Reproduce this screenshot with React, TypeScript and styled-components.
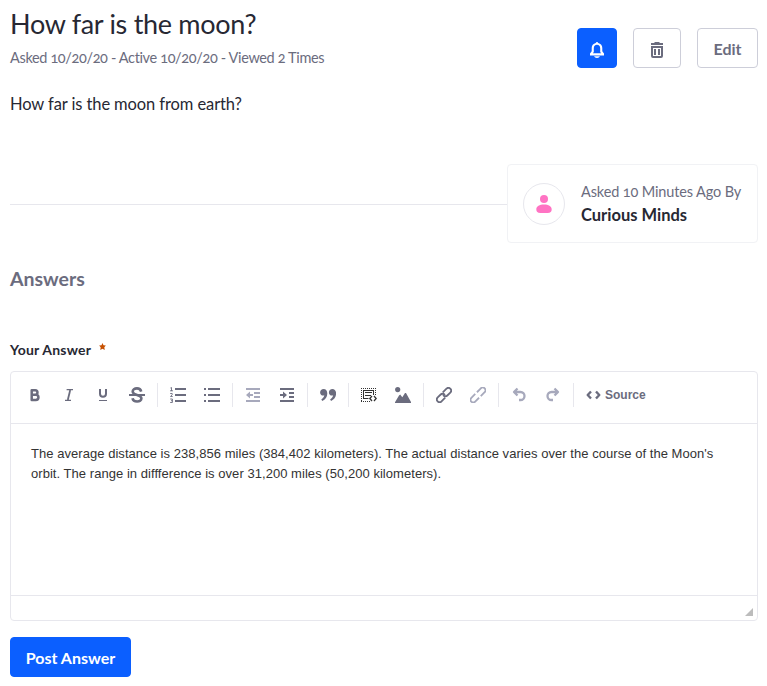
import React from 'react';
import styled, { createGlobalStyle } from 'styled-components';

const Global = createGlobalStyle`
  * { box-sizing: border-box; }
  body {
    margin: 0;
    background: #fff;
    color: #272833;
    font-family: Lato, 'Open Sans', sans-serif;
    font-variant-numeric: oldstyle-nums;
  }
  h1, h2, p { margin: 0; }
  svg { display: block; }
`;

const Page = styled.main`
  width: 748px;
  margin-left: 10px;
  padding-top: 4px;
`;

const Header = styled.header`
  display: flex;
  justify-content: space-between;
  height: 66px;
`;

const Title = styled.h1`
  padding-bottom: 2px;
  font-size: 27px;
  font-weight: 400;
  letter-spacing: -0.3px;
  line-height: 40px;
`;

const Meta = styled.p`
  font-size: 14.5px;
  line-height: 24px;
  letter-spacing: -0.36px;
  color: #6b6c7e;
`;

const Actions = styled.div`
  display: flex;
  gap: 16px;
  padding-top: 24px;
`;

const Button = styled.button<{ $primary?: boolean; $width: number }>`
  display: flex;
  align-items: center;
  justify-content: center;
  width: ${(p) => p.$width}px;
  height: 40px;
  padding: 2px 0 0;
  border: 1px solid ${(p) => (p.$primary ? '#0b5fff' : '#cdced9')};
  border-radius: 4px;
  background: ${(p) => (p.$primary ? '#0b5fff' : '#fff')};
  color: ${(p) => (p.$primary ? '#fff' : '#6b6c7e')};
  font-family: inherit;
  font-size: 16px;
  font-weight: 700;
  line-height: 24px;
  white-space: nowrap;

  svg { margin-top: 2px; }
`;

const Body = styled.p`
  margin-top: 22px;
  font-size: 16.5px;
  letter-spacing: -0.1px;
  line-height: 24px;
`;

const AuthorRow = styled.div`
  display: flex;
  align-items: center;
  margin-top: 48px;
`;

const Rule = styled.div`
  flex: 1;
  height: 1px;
  margin-top: 2px;
  background: #e7e7ed;
`;

const AuthorCard = styled.div`
  display: flex;
  align-items: center;
  gap: 16px;
  width: 251px;
  height: 79px;
  padding-left: 15px;
  border: 1px solid #f1f2f5;
  border-radius: 4px;
  white-space: nowrap;
`;

const Avatar = styled.div`
  display: grid;
  place-items: center;
  width: 42px;
  height: 42px;
  border: 1px solid #e7e7ed;
  border-radius: 50%;
`;

const AskedBy = styled.p`
  font-size: 14.5px;
  line-height: 24px;
  letter-spacing: -0.13px;
  color: #6b6c7e;
`;

const AuthorName = styled.p`
  padding-bottom: 2px;
  font-size: 16.5px;
  font-weight: 700;
  line-height: 22px;
`;

const SectionTitle = styled.h2`
  margin-top: 21px;
  font-size: 19.5px;
  font-weight: 700;
  line-height: 30px;
  color: #6b6c7e;
`;

const Label = styled.label`
  display: flex;
  gap: 8px;
  margin-top: 45px;
  height: 21px;
  font-size: 14px;
  font-weight: 700;
  letter-spacing: 0.2px;
  line-height: 21px;
`;

const Required = styled.svg`
  margin-top: 4px;
  color: #c65000;
`;

const Editor = styled.section`
  display: flex;
  flex-direction: column;
  height: 250px;
  margin-top: 11px;
  border: 1px solid #e7e7ed;
  border-radius: 4px;
`;

const Toolbar = styled.div`
  display: flex;
  align-items: center;
  height: 52px;
  padding: 0 7px 5px;
  border-bottom: 1px solid #e7e7ed;
`;

const Tool = styled.span<{ $disabled?: boolean }>`
  display: grid;
  place-items: center;
  width: 34px;
  height: 32px;
  color: ${(p) => (p.$disabled ? '#a7a9bc' : '#6b6c7e')};
`;

const Divider = styled.span`
  width: 1px;
  height: 24px;
  margin: 0 3px;
  background: #e7e7ed;
`;

const Source = styled.span`
  display: flex;
  align-items: center;
  gap: 4px;
  margin-left: 9px;
  color: #6b6c7e;
  font: 700 12px/24px 'Liberation Sans', Arial, sans-serif;
`;

const Content = styled.div`
  flex: 1;
  padding: 20px;
  color: #333;
  font: 400 13px/20px 'Liberation Sans', Arial, sans-serif;
  font-variant-numeric: normal;
  letter-spacing: 0.045px;
`;

const Footer = styled.div`
  display: flex;
  align-items: flex-end;
  justify-content: flex-end;
  height: 25px;
  padding: 0 4px 4px;
  border-top: 1px solid #e7e7ed;
`;

const Submit = styled.div`
  margin-top: 16px;
`;

const Icon = ({ children }: { children: React.ReactNode }) => (
  <svg width="16" height="16" viewBox="0 0 16 16" fill="currentColor">
    {children}
  </svg>
);

const Line = ({ d, width = 2 }: { d: string; width?: number }) => (
  <path d={d} fill="none" stroke="currentColor" strokeWidth={width} strokeLinejoin="round" />
);

const Bold = () => (
  <Icon><Line width={2.5} d="M4.700 3.200H8.200a2.200 2.200 0 0 1 0 4.500H4.700zM4.700 7.700h4.100a2.500 2.500 0 0 1 0 5.300H4.700z" /></Icon>
);
const Italic = () => (
  <Icon><Line width={1.3} d="M5.600 2.600H12M4 13.400h6" /><Line width={1.8} d="M9.200 3 6.800 13" /></Icon>
);
const Underline = () => (
  <Icon><Line width={2} d="M5 2v4.800a3 3 0 0 0 6 0V2" /><path d="M4 13h8v1H4z" /></Icon>
);
const Strike = () => (
  <Icon>
    <Line width={2.6} d="M12.200 4.600C11.700 2.600 10.300 1.400 8 1.400c-2.600 0-4.300 1.200-4.300 3.100 0 2.200 2 2.800 4.300 3.400 2.600.7 4.400 1.400 4.400 3.400 0 2.100-1.800 3.200-4.300 3.200-2.700 0-4.200-1.300-4.600-3.300" />
    <Line width={2} d="M0 8h16" />
  </Icon>
);
const Numbered = () => (
  <Icon>
    <path d="M5 1h11v2H5zM5 7h11v2H5zM5 13h11v2H5z" />
    <Line width={0.9} d="M.4 1 1.500.5V4M0 3.800h3M.2 6.500h2v1.200L.5 9.500h2.200M.2 12h2.200v3.500H.2M1 13.700h1.400" />
  </Icon>
);
const Bulleted = () => (
  <Icon><path d="M4 1h12v2H4zM4 7h12v2H4zM4 13h12v2H4zM0 1h2v2H0zM0 7h2v2H0zM0 13h2v2H0z" /></Icon>
);
const Outdent = () => (
  <Icon><path d="M1 1h14v2H1zM9 5h6v2H9zM9 9h6v2H9zM1 13h14v2H1zM1 8l4-3.500V7h3v2H5v2.500z" /></Icon>
);
const Indent = () => (
  <Icon><path d="M1 1h14v2H1zM10 5h5v2h-5zM10 9h5v2h-5zM1 13h14v2H1zM8 8 4 4.500V7H1v2h3v2.500z" /></Icon>
);
const Quote = () => (
  <Icon>
    <path d="M3.600 2C1.600 2 .1 3.500.1 5.400c0 1.800 1.400 3.200 3 3.200.5 0 .9-.1 1.200-.3-.2 1.800-1.300 3.100-3 4.100l1 1.600c3.100-1.500 5-4 5-7.500C7.300 3.800 6 2 3.600 2z" />
    <path d="M12.400 2c-2 0-3.500 1.500-3.500 3.400 0 1.800 1.400 3.200 3 3.200.5 0 .9-.1 1.200-.3-.2 1.800-1.300 3.100-3 4.100l1 1.600c3.100-1.500 5-4 5-7.500C16.100 3.800 14.800 2 12.400 2z" />
  </Icon>
);
const Embed = () => (
  <svg width="16" height="16" viewBox="0 0 16 16" fill="none" stroke="#333">
    <path d="M0 1.500h15M0 14.500h9" strokeDasharray="1 1" />
    <path d="M.5 3v11M14.500 3v5" strokeDasharray="1 1" />
    <path d="M2 3.500h11M2.500 4v8M12.500 4v4M4 5.500h7M4 8.500h6M2 11.500h5.500" />
    <path d="M11 9 8.800 11.500 11 14M13 9l2.200 2.500L13 14" strokeWidth="1.300" />
  </svg>
);
const Image = () => (
  <Icon><circle cx="2.700" cy="2.600" r="2.600" /><path d="M0 16V15.200L4 8.500 5.200 7.600 7.300 10.200 10 6H11L16 15v1z" /></Icon>
);
const Link = () => (
  <Icon>
    <g transform="rotate(-45 8 8)">
      <Line width={1.8} d="M7 10.700H1.800a2.700 2.700 0 0 1 0-5.400H6a2.700 2.700 0 0 1 2.600 3.300M9 5.300h5.200a2.700 2.700 0 0 1 0 5.400H10a2.700 2.700 0 0 1-2.600-3.300" />
    </g>
  </Icon>
);
const Unlink = () => (
  <Icon>
    <g transform="rotate(-45 8 8)">
      <Line width={1.8} d="M6.800 10.700H1.300a2.700 2.700 0 0 1 0-5.400H6.800M9.200 5.300h5.500a2.700 2.700 0 0 1 0 5.400H9.200" />
    </g>
  </Icon>
);
const Undo = () => (
  <Icon><Line width={2.3} d="M6.500 1.500 3 5l3.500 3.500M3 5h6.500a4 4 0 0 1 0 8H8" /></Icon>
);
const Redo = () => (
  <Icon><Line width={2.3} d="M9.500 1.500 13 5 9.500 8.500M13 5H6.500a4 4 0 0 0 0 8H8" /></Icon>
);
const Bell = () => (
  <Icon>
    <path fillRule="evenodd" d="M8 0a1.300 1.300 0 0 0-1.200 1C4.200 1.500 2.700 3.500 2.700 6v3.200L1 11.500v1.900h14v-1.900L13.300 9.200V6c0-2.500-1.500-4.500-4.100-5A1.300 1.300 0 0 0 8 0zm0 2.800c2 0 3.200 1.400 3.200 3.500v3.600l.9 1.400H3.900l.9-1.400V6.300C4.800 4.200 6 2.800 8 2.800z" />
    <path d="M5 14.200h6Q10.200 16 8 16t-3-1.800z" />
  </Icon>
);
const Trash = () => (
  <Icon>
    <path fillRule="evenodd" d="M2 1h3l1-1h4l1 1h3v2H2zM2 4h12v10a2 2 0 0 1-2 2H4a2 2 0 0 1-2-2zm2 2v8h8V6z" />
    <path d="M5 7h2v6H5zM9 7h2v6H9z" />
  </Icon>
);

export default function App() {
  return (
    <>
      <Global />
      <Page>
        <Header>
          <div>
            <Title>How far is the moon?</Title>
            <Meta>Asked 10/20/20 - Active 10/20/20 - Viewed 2 Times</Meta>
          </div>
          <Actions>
            <Button $width={40} $primary aria-label="Subscribe"><Bell /></Button>
            <Button $width={48} aria-label="Delete"><Trash /></Button>
            <Button $width={61}>Edit</Button>
          </Actions>
        </Header>
        <Body>How far is the moon from earth?</Body>
        <AuthorRow>
          <Rule />
          <AuthorCard>
            <Avatar>
              <svg width="16" height="18" viewBox="0 0 16 18" fill="#ff73c3">
                <circle cx="8" cy="4" r="4" />
                <path d="M.3 14.300C.3 11 3.500 9.400 8 9.400s7.700 1.600 7.700 4.900c0 2.500-1.300 3.700-4 3.700H4.300c-2.700 0-4-1.200-4-3.700z" />
              </svg>
            </Avatar>
            <div>
              <AskedBy>Asked 10 Minutes Ago By</AskedBy>
              <AuthorName>Curious Minds</AuthorName>
            </div>
          </AuthorCard>
        </AuthorRow>
        <SectionTitle>Answers</SectionTitle>
        <Label>
          Your Answer
          <Required width="7" height="7" viewBox="0 0 6 6.200" fill="currentColor">
            <path d="m3 0 .9 2L6 2.200 4.600 3.800 5 6.200 3 5 1 6.200l.4-2.400L0 2.200 2.100 2z" />
          </Required>
        </Label>
        <Editor>
          <Toolbar>
            <Tool><Bold /></Tool>
            <Tool><Italic /></Tool>
            <Tool><Underline /></Tool>
            <Tool><Strike /></Tool>
            <Divider />
            <Tool><Numbered /></Tool>
            <Tool><Bulleted /></Tool>
            <Divider />
            <Tool $disabled><Outdent /></Tool>
            <Tool><Indent /></Tool>
            <Divider />
            <Tool><Quote /></Tool>
            <Divider />
            <Tool><Embed /></Tool>
            <Tool><Image /></Tool>
            <Divider />
            <Tool><Link /></Tool>
            <Tool $disabled><Unlink /></Tool>
            <Divider />
            <Tool $disabled><Undo /></Tool>
            <Tool $disabled><Redo /></Tool>
            <Divider />
            <Source>
              <svg width="15" height="10" viewBox="0 0 15 10"><Line width={2.4} d="M5 1.500 1.700 5 5 8.500M10 1.500 13.300 5 10 8.500" /></svg>
              Source
            </Source>
          </Toolbar>
          <Content>
            The average distance is 238,856 miles (384,402 kilometers). The actual distance varies over the course of the Moon's orbit. The range in diffference is over 31,200 miles (50,200 kilometers).
          </Content>
          <Footer>
            <svg width="8" height="8" viewBox="0 0 8 8" fill="#bcbcbc"><path d="M8 0v8H0z" /></svg>
          </Footer>
        </Editor>
        <Submit><Button $width={121} $primary>Post Answer</Button></Submit>
      </Page>
    </>
  );
}
